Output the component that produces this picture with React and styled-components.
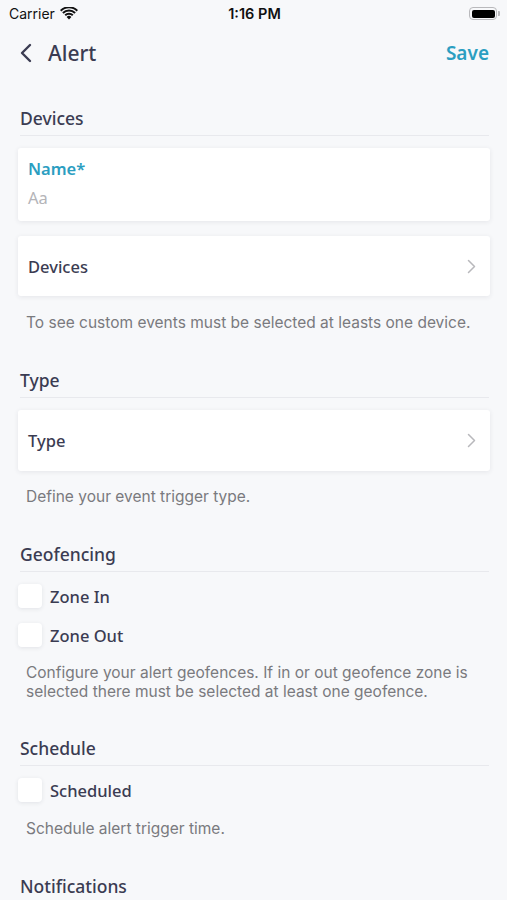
import React from "react";
import styled, { createGlobalStyle } from "styled-components";

const Colors = {
  BG: "#f7f8fa",
  TEXT: "#3b3c52",
  TEAL: "#2b9ec1",
  HINT: "#7a7a7e",
  PLACEHOLDER: "#b4b4b8",
  LINE: "#e8e9ed",
  WHITE: "#ffffff",
};

const GlobalStyle = createGlobalStyle`
  html, body {
    margin: 0;
    padding: 0;
    background: ${Colors.BG};
  }
  body {
    font-family: "Noto Sans", "Open Sans", sans-serif;
    color: ${Colors.TEXT};
  }
`;

const Screen = styled.div`
  width: 507px;
  height: 900px;
  overflow: hidden;
  background: ${Colors.BG};
`;

const StatusBar = styled.div`
  height: 26px;
  display: grid;
  grid-template-columns: 1fr auto 1fr;
  align-items: center;
  padding: 0 7px 0 9px;
  font-family: Inter, "Liberation Sans", sans-serif;
  font-size: 14px;
  color: #111;
`;

const Carrier = styled.div`
  display: flex;
  align-items: center;
  gap: 5px;
`;

const Clock = styled.div`
  font-weight: 600;
  font-size: 14.5px;
`;

const Battery = styled.div`
  justify-self: end;
  display: flex;
  align-items: center;
  margin-top: 1px;
`;

const BatteryBody = styled.div`
  width: 28px;
  height: 13px;
  border: 1.5px solid #b9b9bc;
  border-radius: 4px;
  padding: 1.5px;
  box-sizing: border-box;

  &::before {
    content: "";
    display: block;
    width: 100%;
    height: 100%;
    background: #000;
    border-radius: 2px;
  }
`;

const BatteryCap = styled.div`
  width: 2px;
  height: 5px;
  margin-left: 1px;
  background: #b9b9bc;
  border-radius: 0 1px 1px 0;
`;

const NavBar = styled.div`
  height: 54px;
  display: flex;
  align-items: center;
  justify-content: space-between;
  padding: 0 18px 0 20px;
`;

const NavLeft = styled.div`
  display: flex;
  align-items: center;
  gap: 16px;
`;

const Title = styled.div`
  font-size: 21px;
  font-weight: 500;
  color: ${Colors.TEXT};
`;

const SaveButton = styled.button`
  border: none;
  background: none;
  padding: 0;
  font-family: inherit;
  font-size: 19px;
  font-weight: 600;
  color: ${Colors.TEAL};
`;

const Content = styled.div`
  padding: 0 17px 0 18px;
`;

const SectionHeader = styled.div`
  margin: ${(p) => (p.$first ? "26px" : "35px")} 1px 0 2px;
  padding-bottom: 5px;
  border-bottom: 1px solid ${Colors.LINE};
  font-size: 17.5px;
  line-height: 24px;
  font-weight: 500;
  color: ${Colors.TEXT};
`;

const Card = styled.div`
  margin-top: ${(p) => p.$gap || 12}px;
  background: ${Colors.WHITE};
  border-radius: 3px;
  box-shadow: 0 1px 5px rgba(40, 45, 70, 0.09);
`;

const FieldCard = styled(Card)`
  padding: 10px 10px 12px;
`;

const FieldLabel = styled.div`
  font-size: 16.5px;
  line-height: 22px;
  font-weight: 600;
  color: ${Colors.TEAL};
`;

const FieldInput = styled.div`
  margin-top: 7px;
  font-size: 16.5px;
  line-height: 22px;
  color: ${Colors.PLACEHOLDER};
`;

const LinkRow = styled(Card)`
  height: ${(p) => p.$height || 60}px;
  display: flex;
  align-items: center;
  justify-content: space-between;
  padding: 0 14px 0 10px;
  box-sizing: border-box;
  font-size: 16.5px;
  font-weight: 500;
  color: ${Colors.TEXT};
`;

const Hint = styled.div`
  margin-top: ${(p) => p.$gap || 17}px;
  padding-left: 8px;
  font-family: Inter, "Liberation Sans", sans-serif;
  font-size: 15.5px;
  line-height: ${(p) => (p.$multi ? "19px" : "20px")};
  color: ${Colors.HINT};
`;

const CheckList = styled.div`
  margin-top: 12px;
  display: flex;
  flex-direction: column;
  gap: 15px;
`;

const CheckRow = styled.label`
  display: flex;
  align-items: center;
  gap: 8px;
  font-size: 16.5px;
  font-weight: 500;
  color: ${Colors.TEXT};
`;

const CheckBox = styled.span`
  width: 24px;
  height: 24px;
  background: ${Colors.WHITE};
  border-radius: 4px;
  box-shadow: 0 1px 4px rgba(40, 45, 70, 0.1);
`;

const Chevron = () => (
  <svg width="9" height="15" viewBox="0 0 9 15" fill="none">
    <path d="M1.5 1.5L7.5 7.5L1.5 13.5" stroke="#b8b8bc" strokeWidth="1.5" strokeLinecap="round" strokeLinejoin="round" />
  </svg>
);

const BackArrow = () => (
  <svg width="12" height="20" viewBox="0 0 12 20" fill="none">
    <path d="M10 2L2 10L10 18" stroke="#3b3c52" strokeWidth="2.4" strokeLinecap="round" strokeLinejoin="round" />
  </svg>
);

const Wifi = () => (
  <svg width="18" height="13" viewBox="0 0 18 13">
    <path d="M9 12.5L6.6 9.9a3.4 3.4 0 0 1 4.8 0z" fill="#111" />
    <path d="M4.5 7.6a6.4 6.4 0 0 1 9 0l-1.4 1.5a4.4 4.4 0 0 0-6.2 0z" fill="#111" />
    <path d="M2.2 5.3a9.6 9.6 0 0 1 13.6 0l-1.4 1.5a7.6 7.6 0 0 0-10.8 0z" fill="#111" />
    <path d="M0 3a12.8 12.8 0 0 1 18 0l-1.4 1.5a10.8 10.8 0 0 0-15.2 0z" fill="#111" />
  </svg>
);

function Check({ label }) {
  return (
    <CheckRow>
      <CheckBox />
      {label}
    </CheckRow>
  );
}

export default function App() {
  return (
    <Screen>
      <GlobalStyle />
      <StatusBar>
        <Carrier>
          Carrier <Wifi />
        </Carrier>
        <Clock>1:16 PM</Clock>
        <Battery>
          <BatteryBody />
          <BatteryCap />
        </Battery>
      </StatusBar>

      <NavBar>
        <NavLeft>
          <BackArrow />
          <Title>Alert</Title>
        </NavLeft>
        <SaveButton>Save</SaveButton>
      </NavBar>

      <Content>
        <SectionHeader $first>Devices</SectionHeader>
        <FieldCard>
          <FieldLabel>Name*</FieldLabel>
          <FieldInput>Aa</FieldInput>
        </FieldCard>
        <LinkRow $gap={15}>
          Devices
          <Chevron />
        </LinkRow>
        <Hint>To see custom events must be selected at leasts one device.</Hint>

        <SectionHeader>Type</SectionHeader>
        <LinkRow $height={61}>
          Type
          <Chevron />
        </LinkRow>
        <Hint $gap={16}>Define your event trigger type.</Hint>

        <SectionHeader>Geofencing</SectionHeader>
        <CheckList>
          <Check label="Zone In" />
          <Check label="Zone Out" />
        </CheckList>
        <Hint $gap={16} $multi>
          Configure your alert geofences. If in or out geofence zone is selected there must be selected at least one geofence.
        </Hint>

        <SectionHeader>Schedule</SectionHeader>
        <CheckList>
          <Check label="Scheduled" />
        </CheckList>
        <Hint>Schedule alert trigger time.</Hint>

        <SectionHeader>Notifications</SectionHeader>
      </Content>
    </Screen>
  );
}
